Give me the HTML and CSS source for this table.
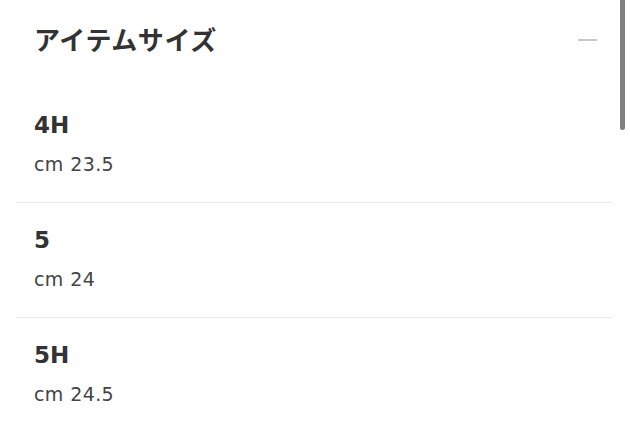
FILE: index.html
```html
<!DOCTYPE html>
<html lang="ja">
<head>
    <meta charset="UTF-8">
    <meta name="viewport" content="width=device-width, initial-scale=1.0">
    <title>アイテムサイズ</title>
    <link rel="stylesheet" href="styles.css">
</head>
<body>
    <div class="panel">
        <div class="panel-header">
            <h2 class="panel-title">アイテムサイズ</h2>
            <span class="collapse-icon"></span>
        </div>

        <ul class="size-list">
            <li class="size-item">
                <div class="size-name">4H</div>
                <div class="size-value">cm 23.5</div>
            </li>
            <li class="size-item">
                <div class="size-name">5</div>
                <div class="size-value">cm 24</div>
            </li>
            <li class="size-item">
                <div class="size-name">5H</div>
                <div class="size-value">cm 24.5</div>
            </li>
        </ul>
    </div>

    <div class="scroll-thumb"></div>
</body>
</html>
```

FILE: styles.css
```css
html, body {
  margin: 0;
  padding: 0;
  height: 100%;
  overflow: hidden;
  background: #fff;
}

body {
  font-family: "DejaVu Sans", "Noto Sans CJK JP", sans-serif;
  color: #333;
}

.panel {
  margin: 0 17px 0 16px;
}

/* Header */
.panel-header {
  display: flex;
  align-items: center;
  justify-content: space-between;
  height: 78px;
  margin-bottom: 10px;
  padding: 0 16px 0 18px;
}

.panel-title {
  margin: 0;
  font-family: "Noto Sans CJK JP", sans-serif;
  font-size: 26px;
  font-weight: bold;
  line-height: 1;
  letter-spacing: 0.6px;
  color: #333;
}

.collapse-icon {
  display: block;
  width: 19px;
  height: 2px;
  margin-top: 2px;
  background: #c8c8c8;
}

/* Size list */
.size-list {
  list-style: none;
  margin: 0;
  padding: 0;
}

.size-item {
  padding: 23px 18px 26px 18px;
  border-bottom: 1px solid #ebebeb;
}

.size-name {
  font-size: 23px;
  font-weight: bold;
  line-height: 28px;
  color: #333;
}

.size-value {
  margin-top: 13px;
  font-size: 19px;
  line-height: 24px;
  letter-spacing: 0.4px;
  color: #444;
}

/* Overlay scrollbar */
.scroll-thumb {
  position: absolute;
  top: 0;
  right: 5px;
  width: 5px;
  height: 130px;
  background: #808080;
  border-radius: 0 0 3px 3px;
}
```
